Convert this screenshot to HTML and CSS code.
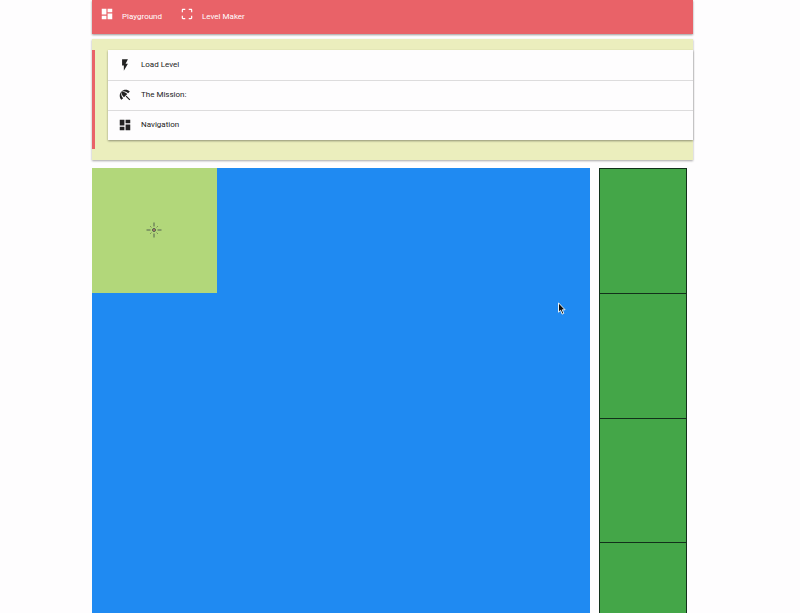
FILE: index.html
```html
<!DOCTYPE html>
<html lang="en">
<head>
<meta charset="utf-8">
<meta name="viewport" content="width=device-width, initial-scale=1">
<title>Playground</title>
<link rel="stylesheet" href="styles.css">
</head>
<body>
<div class="page">
  <nav class="navbar">
    <a class="nav-link" href="#playground">
      <svg class="icon" viewBox="0 0 24 24" aria-hidden="true"><path d="M3 13h8V3H3v10zm0 8h8v-6H3v6zm10 0h8V11h-8v10zm0-18v6h8V3h-8z"/></svg>
      <span class="nav-label">Playground</span>
    </a>
    <a class="nav-link" href="#maker">
      <svg class="icon" viewBox="0 0 24 24" aria-hidden="true"><path d="M3 5v4h2V5h4V3H5c-1.1 0-2 .9-2 2zm2 10H3v4c0 1.1.9 2 2 2h4v-2H5v-4zm14 4h-4v2h4c1.1 0 2-.9 2-2v-4h-2v4zm0-16h-4v2h4v4h2V5c0-1.1-.9-2-2-2z"/></svg>
      <span class="nav-label">Level Maker</span>
    </a>
  </nav>

  <section class="panel">
    <div class="quote">
      <div class="menu">
        <button class="menu-item" type="button">
          <svg class="icon" viewBox="0 0 24 24" aria-hidden="true"><path d="M7 2v11h3v9l7-12h-4l4-8z"/></svg>
          <span>Load Level</span>
        </button>
        <button class="menu-item" type="button">
          <svg class="icon" viewBox="0 0 24 24" aria-hidden="true"><path d="M13.127 14.56l1.43-1.43 6.44 6.443L19.57 21zm4.293-5.73l2.86-2.86c-3.95-3.95-10.35-3.96-14.3-.02 3.93-1.3 8.31-.25 11.44 2.88zM5.95 5.98c-3.94 3.95-3.93 10.35.02 14.3l2.86-2.86C5.7 14.29 4.65 9.91 5.95 5.98zm.02-.02l-.01.01c-.38 3.01 1.17 6.88 4.3 10.02l5.72-5.72c-3.13-3.13-7.01-4.68-10.01-4.31z"/></svg>
          <span>The Mission:</span>
        </button>
        <button class="menu-item" type="button">
          <svg class="icon" viewBox="0 0 24 24" aria-hidden="true"><path d="M3 13h8V3H3v10zm0 8h8v-6H3v6zm10 0h8V11h-8v10zm0-18v6h8V3h-8z"/></svg>
          <span>Navigation</span>
        </button>
      </div>
    </div>
  </section>

  <main class="stage">
    <div class="board">
      <div class="tile">
        <svg class="target" viewBox="0 0 16 16" aria-hidden="true">
          <path class="ray" d="M8 .5v4M8 11.500v4M.5 8h4M11.500 8h4"/>
          <path class="spark" d="M4.200 4.200l1.200 1.200M11.800 4.200l-1.200 1.200M4.200 11.800l1.200-1.200M11.800 11.800l-1.200-1.200"/>
          <circle class="ring" cx="8" cy="8" r="1.500"/>
          <circle class="dot" cx="8" cy="8" r="1"/>
        </svg>
      </div>
      <svg class="pointer" viewBox="0 0 8 13" aria-hidden="true"><path d="M.5.800v9.400l2.100-1.900 1.500 3.800 1.700-.700-1.500-3.600h2.800z"/></svg>
    </div>
    <div class="slots">
      <div class="slot"></div>
      <div class="slot"></div>
      <div class="slot"></div>
      <div class="slot"></div>
    </div>
  </main>
</div>
</body>
</html>
```
FILE: styles.css
```css
* {
  box-sizing: border-box;
}

html {
  scrollbar-width: none;
}

body {
  margin: 0;
  background: #fefdfe;
  color: #222;
  font: 8px/12px Roboto, "Liberation Sans", sans-serif;
}

.page {
  padding: 0 107px 0 92px;
}

.icon {
  flex: none;
  width: 14px;
  height: 14px;
  fill: currentColor;
}

.navbar {
  display: flex;
  gap: 18px;
  height: 34px;
  padding: 7px 8px;
  background: #e96268;
  box-shadow: 0 1px 2px rgba(0, 0, 0, 0.4);
}

.nav-link {
  display: flex;
  gap: 8px;
  color: #fff;
  text-decoration: none;
}

.nav-label {
  padding-top: 4px;
}

.panel {
  margin: 5px 0 8px;
  padding: 11px 0;
  background: #ebeebd;
  box-shadow: 0 1px 2px rgba(0, 0, 0, 0.35);
}

.quote {
  padding: 0 0 9px 13px;
  border-left: 3px solid #e96268;
}

.menu {
  background: #fefdfe;
  box-shadow: 0 1px 2px rgba(0, 0, 0, 0.4);
}

.menu-item {
  display: flex;
  align-items: center;
  gap: 9px;
  width: 100%;
  height: 30px;
  padding: 0 10px;
  border: 0;
  background: none;
  color: inherit;
  font: inherit;
  text-align: left;
}

.menu-item + .menu-item {
  padding-bottom: 1px;
  border-top: 1px solid #dddcdd;
}

.stage {
  display: flex;
  gap: 9px;
  padding-right: 6px;
}

.board {
  position: relative;
  flex: 1;
  aspect-ratio: 1;
  background: #1f8af2;
}

.tile {
  display: flex;
  align-items: center;
  justify-content: center;
  width: 25%;
  height: 25%;
  background: #b2d77a;
}

.target {
  width: 16px;
  height: 16px;
  fill: none;
}

.ray {
  stroke: #52634f;
}

.spark {
  stroke: #6c8250;
}

.ring {
  stroke: #4c5650;
}

.dot {
  fill: #a0645a;
}

.pointer {
  position: absolute;
  top: 134px;
  right: 24px;
  width: 8px;
  height: 13px;
  fill: #111;
  stroke: #e8f1f5;
}

.slots {
  display: grid;
  grid-template-rows: repeat(4, 1fr);
  width: 88px;
  border: 1px solid #12301a;
  border-bottom: 0;
  background: #44a648;
}

.slot + .slot {
  border-top: 1px solid #12301a;
}
```
